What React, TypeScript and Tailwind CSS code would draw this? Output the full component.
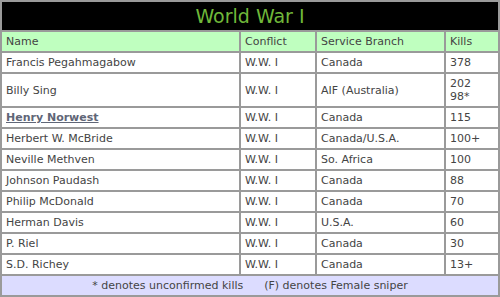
const rows: { name: string; conflict: string; branch: string; kills: string[]; link?: boolean }[] = [
  { name: 'Francis Pegahmagabow', conflict: 'W.W. I', branch: 'Canada', kills: ['378'] },
  { name: 'Billy Sing', conflict: 'W.W. I', branch: 'AIF (Australia)', kills: ['202', '98*'] },
  { name: 'Henry Norwest', conflict: 'W.W. I', branch: 'Canada', kills: ['115'], link: true },
  { name: 'Herbert W. McBride', conflict: 'W.W. I', branch: 'Canada/U.S.A.', kills: ['100+'] },
  { name: 'Neville Methven', conflict: 'W.W. I', branch: 'So. Africa', kills: ['100'] },
  { name: 'Johnson Paudash', conflict: 'W.W. I', branch: 'Canada', kills: ['88'] },
  { name: 'Philip McDonald', conflict: 'W.W. I', branch: 'Canada', kills: ['70'] },
  { name: 'Herman Davis', conflict: 'W.W. I', branch: 'U.S.A.', kills: ['60'] },
  { name: 'P. Riel', conflict: 'W.W. I', branch: 'Canada', kills: ['30'] },
  { name: 'S.D. Richey', conflict: 'W.W. I', branch: 'Canada', kills: ['13+'] },
];

const cell = 'border border-[#9a9a9a] px-[4px] py-[3px] text-left align-middle font-normal';

export default function App() {
  return (
    <div className="w-[500px] h-[297px] bg-white font-['DejaVu_Sans',Verdana,sans-serif] text-[11px] leading-[13px] text-[#444]">
      <table className="w-[500px] table-fixed border-separate border-spacing-0 border border-[#9a9a9a]">
        <colgroup>
          <col className="w-[239px]" />
          <col className="w-[76px]" />
          <col className="w-[129px]" />
          <col />
        </colgroup>
        <thead>
          <tr>
            <th colSpan={4} className="h-[30px] border border-[#9a9a9a] bg-black text-center text-[19px] leading-[20px] font-normal text-[#70b83a]">
              World War I
            </th>
          </tr>
          <tr className="bg-[#bfffbf]">
            <th className={cell}>Name</th>
            <th className={cell}>Conflict</th>
            <th className={cell}>Service Branch</th>
            <th className={cell}>Kills</th>
          </tr>
        </thead>
        <tbody>
          {rows.map((r) => (
            <tr key={r.name}>
              <td className={cell}>
                {r.link ? (
                  <a href="#" className="font-bold underline text-[#5f6677]">{r.name}</a>
                ) : (
                  r.name
                )}
              </td>
              <td className={cell}>{r.conflict}</td>
              <td className={cell}>{r.branch}</td>
              <td className={cell}>
                {r.kills.map((k, i) => (
                  <span key={k}>
                    {i > 0 && <br />}
                    {k}
                  </span>
                ))}
              </td>
            </tr>
          ))}
          <tr>
            <td colSpan={4} className="border border-[#9a9a9a] bg-[#dcdcff] py-[3px] text-center">
              * denotes unconfirmed kills&nbsp;&nbsp;&nbsp;&nbsp;&nbsp;&nbsp;(F) denotes Female sniper
            </td>
          </tr>
        </tbody>
      </table>
    </div>
  );
}
